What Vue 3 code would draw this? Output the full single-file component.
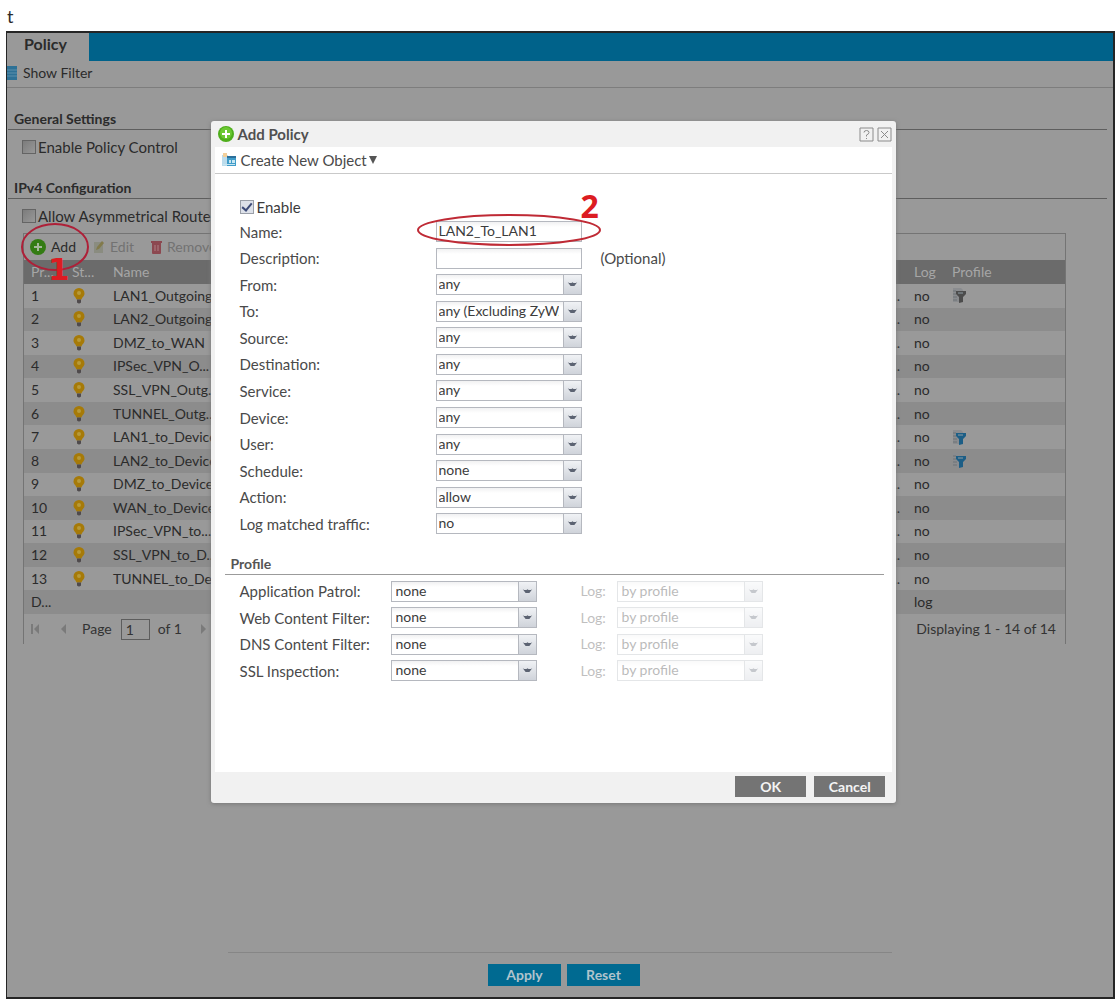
<script setup>
import { ref } from 'vue'

const rules = [
  { id: '1', name: 'LAN1_Outgoing', log: 'no', profile: 'grey' },
  { id: '2', name: 'LAN2_Outgoing', log: 'no' },
  { id: '3', name: 'DMZ_to_WAN', log: 'no' },
  { id: '4', name: 'IPSec_VPN_O...', log: 'no' },
  { id: '5', name: 'SSL_VPN_Outg...', log: 'no' },
  { id: '6', name: 'TUNNEL_Outg...', log: 'no' },
  { id: '7', name: 'LAN1_to_Device', log: 'no', profile: 'blue' },
  { id: '8', name: 'LAN2_to_Device', log: 'no', profile: 'blue' },
  { id: '9', name: 'DMZ_to_Device', log: 'no' },
  { id: '10', name: 'WAN_to_Device', log: 'no' },
  { id: '11', name: 'IPSec_VPN_to...', log: 'no' },
  { id: '12', name: 'SSL_VPN_to_D...', log: 'no' },
  { id: '13', name: 'TUNNEL_to_De...', log: 'no' },
  { id: 'D...', name: '', log: 'log' },
]

const fields = [
  { key: 'from', label: 'From:', value: 'any' },
  { key: 'to', label: 'To:', value: 'any (Excluding ZyWALL)' },
  { key: 'source', label: 'Source:', value: 'any' },
  { key: 'destination', label: 'Destination:', value: 'any' },
  { key: 'service', label: 'Service:', value: 'any' },
  { key: 'device', label: 'Device:', value: 'any' },
  { key: 'user', label: 'User:', value: 'any' },
  { key: 'schedule', label: 'Schedule:', value: 'none' },
  { key: 'action', label: 'Action:', value: 'allow' },
  { key: 'log', label: 'Log matched traffic:', value: 'no' },
]

const profiles = [
  { key: 'app', label: 'Application Patrol:' },
  { key: 'web', label: 'Web Content Filter:' },
  { key: 'dns', label: 'DNS Content Filter:' },
  { key: 'ssl', label: 'SSL Inspection:' },
]

const name = ref('LAN2_To_LAN1')
const description = ref('')
const enabled = ref(true)
const page = ref('1')
</script>

<template>
  <div class="doc">
    <p class="stray">t</p>
    <div class="frame">
      <nav class="tabs"><a class="tab" href="#policy">Policy</a></nav>
      <div class="filterbar">
        <svg class="filter-icon" viewBox="0 0 10 14" aria-hidden="true">
          <rect width="10" height="14" fill="#2d7196" />
          <path d="M0 4h10M0 7h10M0 10h10" stroke="#5d90ab" />
        </svg>
        <a href="#filter">Show Filter</a>
      </div>

      <h2 class="section">General Settings</h2>
      <label class="check"><input type="checkbox" />Enable Policy Control</label>
      <h2 class="section">IPv4 Configuration</h2>
      <label class="check"><input type="checkbox" />Allow Asymmetrical Route</label>

      <div class="grid">
        <div class="tools">
          <button type="button" class="tool add">
            <svg viewBox="0 0 16 16" width="16" height="16" aria-hidden="true">
              <circle cx="8" cy="8" r="8" fill="#347c14" />
              <path d="M8 4v8M4 8h8" stroke="#a5b89b" stroke-width="2" />
            </svg>Add
          </button>
          <button type="button" class="tool dim edit">
            <svg viewBox="0 0 12 14" width="12" height="14" aria-hidden="true">
              <path d="M1 2h9v11H1z" fill="#8a8c80" />
              <path d="M3 10l1-3 5-6 2 2-5 6z" fill="#827a4b" />
            </svg>Edit
          </button>
          <button type="button" class="tool dim">
            <svg viewBox="0 0 11 14" width="11" height="14" aria-hidden="true">
              <path d="M1 3h9v10q0 1-1 1H2q-1 0-1-1zM0 1h11v2H0z" fill="#8c4850" />
              <path d="M4 5v6M7 5v6" stroke="#ae8085" />
            </svg>Remove
          </button>
          <svg class="ring" viewBox="0 0 70 49" aria-hidden="true">
            <ellipse cx="35" cy="24" rx="33" ry="23" fill="none" stroke="#ae2038" stroke-width="2" />
          </svg>
          <span class="mark">1</span>
        </div>
        <table>
          <colgroup><col class="c-pr" /><col class="c-st" /><col class="c-name" /><col /><col class="c-log" /><col class="c-prof" /></colgroup>
          <thead>
            <tr><th>Pr...</th><th>St...</th><th>Name</th><th></th><th>Log</th><th>Profile</th></tr>
          </thead>
          <tbody>
            <tr v-for="r in rules" :key="r.id">
              <td>{{ r.id }}</td>
              <td>
                <svg v-if="r.name" class="bulb" viewBox="0 0 12 16" aria-hidden="true">
                  <path d="M6 0a5.500 5.500 0 0 1 5.500 5.500c0 3-2.500 3.500-3 6h-5c-.5-2.500-3-3-3-6A5.500 5.500 0 0 1 6 0z" fill="#a67a08" />
                  <circle cx="6" cy="5" r="2" fill="#b79a3a" />
                  <path d="M4 11.500h4v3q-2 2-4 0z" fill="#4f4a4c" />
                </svg>
              </td>
              <td>{{ r.name }}</td>
              <td class="more">{{ r.name ? '...' : '' }}</td>
              <td>{{ r.log }}</td>
              <td>
                <svg v-if="r.profile" :class="['prof', r.profile]" viewBox="0 0 14 15" aria-hidden="true">
                  <path d="M1 0h8l2 2v12H1z" fill="#8a8c8f" />
                  <path d="M1 3h3M1 6h3M1 9h4M1 12h4" stroke="#6d7276" />
                  <path d="M4 3h10v3l-3 3v5l-4 1V9L4 6z" fill="currentColor" />
                  <path d="M6 5h5" stroke="#8d9ba3" />
                </svg>
              </td>
            </tr>
          </tbody>
        </table>
        <div class="pager">
          <button type="button" class="nav" aria-label="First page"><svg viewBox="0 0 10 10" width="10" height="10"><path d="M1 0h2v10H1zM9 0v10L4 5z" /></svg></button>
          <button type="button" class="nav prev" aria-label="Previous page"><svg viewBox="0 0 10 10" width="10" height="10"><path d="M7 0v10L2 5z" /></svg></button>
          <label for="page">Page</label>
          <input id="page" v-model="page" type="text" />
          <span>of 1</span>
          <button type="button" class="nav next" aria-label="Next page"><svg viewBox="0 0 10 10" width="10" height="10"><path d="M2 0v10l5-5z" /></svg></button>
          <span class="count">Displaying 1 - 14 of 14</span>
        </div>
      </div>

      <footer class="actions">
        <button type="button">Apply</button>
        <button type="button">Reset</button>
      </footer>

      <section class="dialog" role="dialog" aria-labelledby="dlg-title">
        <header>
          <svg viewBox="0 0 16 16" width="16" height="16" aria-hidden="true">
            <circle cx="8" cy="8" r="8" fill="#4fae1c" />
            <circle cx="8" cy="7" r="6" fill="#6cc832" />
            <path d="M8 4v8M4 8h8" stroke="#fff" stroke-width="2" />
          </svg>
          <h1 id="dlg-title">Add Policy</h1>
          <button type="button" aria-label="Help"><svg viewBox="0 0 15 15" width="15" height="15"><path d="M1 1h13v13H1z" /><path d="M5 5.500q0-2 2.500-2t2.500 2q0 1.500-2.500 2.500v1.500M7.500 11v1" /></svg></button>
          <button type="button" aria-label="Close"><svg viewBox="0 0 15 15" width="15" height="15"><path d="M1 1h13v13H1z" /><path d="M4 4l7 7M11 4l-7 7" /></svg></button>
        </header>
        <div class="dlg-tools">
          <button type="button">
            <svg viewBox="0 0 14 14" width="14" height="14" aria-hidden="true">
              <path d="M0 2h6v11H0z" fill="#bcdcec" /><path d="M1 0h4v4H1z" fill="#f3cf9a" />
              <path d="M5 3h9v10H5z" fill="#3f9cc9" /><path d="M5 3h9v2H5z" fill="#2c6f9b" />
              <path d="M7 7h2v3H7zM10 7h3v3h-3zM1 11h12v1H1z" fill="#c8e6f2" />
            </svg>Create New Object<svg class="caret" viewBox="0 0 8 8" width="8" height="8" aria-hidden="true"><path d="M0 0h8L4 8z" fill="#555" /></svg>
          </button>
        </div>

        <form @submit.prevent>
          <div class="rows main-rows">
            <label class="enable"><input v-model="enabled" type="checkbox" />Enable</label>
            <div class="row">
              <label for="name">Name:</label>
              <div class="box">
                <input id="name" v-model="name" type="text" />
                <svg class="oval" viewBox="0 0 184 34" aria-hidden="true">
                  <ellipse cx="92" cy="17" rx="91" ry="15" fill="none" stroke="#bf2a35" stroke-width="2" />
                </svg>
                <span class="mark two">2</span>
              </div>
            </div>
            <div class="row">
              <label for="description">Description:</label>
              <div class="box"><input id="description" v-model="description" type="text" /></div>
              <span class="hint">(Optional)</span>
            </div>
            <div v-for="f in fields" :key="f.key" class="row">
              <label :for="f.key">{{ f.label }}</label>
              <div class="box">
                <select :id="f.key"><option>{{ f.value }}</option></select>
                <svg class="trigger" viewBox="0 0 18 19" aria-hidden="true"><path d="M4 7q3 2 5 0q2 2 5 0l-3 4h-4z" fill="#5c6372" /></svg>
              </div>
            </div>
          </div>

          <h2>Profile</h2>
          <div class="rows profile-rows">
            <div v-for="p in profiles" :key="p.key" class="row">
              <label :for="p.key">{{ p.label }}</label>
              <div class="box">
                <select :id="p.key"><option>none</option></select>
                <svg class="trigger" viewBox="0 0 18 19" aria-hidden="true"><path d="M4 7q3 2 5 0q2 2 5 0l-3 4h-4z" fill="#5c6372" /></svg>
              </div>
              <label class="log off" :for="p.key + '-log'">Log:</label>
              <div class="box off">
                <select :id="p.key + '-log'" disabled><option>by profile</option></select>
                <svg class="trigger" viewBox="0 0 18 19" aria-hidden="true"><path d="M4 7q3 2 5 0q2 2 5 0l-3 4h-4z" fill="#5c6372" /></svg>
              </div>
            </div>
          </div>
        </form>

        <div class="dlg-foot">
          <button type="button">OK</button>
          <button type="button">Cancel</button>
        </div>
      </section>
    </div>
  </div>
</template>

<style>
body { background: #fff; }
</style>

<style scoped>
* { box-sizing: border-box; }
.doc {
  display: flex;
  flex-direction: column;
  min-height: 100vh;
  padding: 0 3px 0 6px;
  font: 14px/18px Lato, "Liberation Sans", sans-serif;
  color: #2b2b2b;
}
button, input, select { font: inherit; color: inherit; margin: 0; padding: 0; border: 0; border-radius: 0; background: none; }
a { color: inherit; text-decoration: none; }
h1, h2, p { margin: 0; }
svg { display: block; flex: none; }
.stray { height: 31px; padding: 6px 0 0 1px; font-size: 18px; line-height: 20px; }

.frame {
  position: relative;
  flex: 1;
  display: flex;
  flex-direction: column;
  border: 2px solid #252525;
  border-left-width: 1px;
  background: #999;
}
.tabs { display: flex; height: 28px; background: #00628a; }
.tab { width: 82px; padding: 2px 0 0 17px; background: #999; font-weight: 700; font-size: 16px; color: #2b2b2b; }
.filterbar {
  display: flex;
  align-items: center;
  gap: 6px;
  height: 27px;
  padding-bottom: 3px;
  border-bottom: 1px solid #7d7d7d;
}
.filter-icon { width: 10px; height: 14px; }
.section {
  margin-left: 1px;
  margin-right: 6px;
  padding: 22px 0 1px 6px;
  border-bottom: 1px solid #5e5e5e;
  font-size: 14px;
  line-height: 18px;
  font-weight: 700;
}
.check { display: flex; align-items: center; gap: 2px; height: 18px; margin: 8px 0 0 15px; font-size: 15px; }
input[type="checkbox"] {
  appearance: none;
  width: 14px;
  height: 14px;
  border: 1px solid #646464;
  background: linear-gradient(135deg, #7c7c7c, #989898);
}
.check + .section { padding-top: 23px; }

.grid { margin: 8px 47px 0 16px; border: 1px solid #747474; border-bottom: 0; }
.tools { position: relative; display: flex; align-items: center; height: 26px; padding-left: 6px; }
.tool { display: flex; align-items: center; gap: 5px; }
.tool.dim { color: #727272; margin-left: 17px; }
.ring { position: absolute; left: -4px; top: -11px; width: 70px; height: 49px; z-index: 1; }
.mark {
  position: absolute;
  left: 24px;
  top: 20px;
  z-index: 2;
  font: 700 31px/30px "DejaVu Sans", sans-serif;
  color: #dc1c22;
}
table { width: 100%; height: 354px; table-layout: fixed; border-collapse: collapse; }
.c-pr { width: 41px; }
.c-st { width: 41px; }
.c-name { width: 120px; }
.c-log { width: 38px; }
.c-prof { width: 120px; }
th { background: #6b6b6b; color: #a6a6a6; font-weight: 400; text-align: left; }
th, td { padding: 0 0 0 7px; height: 20px; white-space: nowrap; }
th { height: 24px; }
tbody tr:nth-child(even) { background: #8c8c8c; }
td.more { text-align: right; padding-right: 7px; }
.bulb { width: 12px; height: 16px; margin-left: 1px; }
.prof { width: 14px; height: 15px; }
.prof.grey { color: #4c4c4c; }
.prof.blue { color: #1c5e86; }
.pager { display: flex; align-items: center; height: 30px; padding: 0 9px 0 6px; color: #333; }
.pager input { width: 29px; height: 21px; margin: 0 8px 0 9px; padding-left: 4px; border: 1px solid #5d5d5d; }
.nav svg { fill: #7a7a7a; }
.nav.prev { margin: 0 13px 0 19px; }
.nav.next { margin-left: 17px; }
.count { margin-left: auto; }

.actions {
  display: flex;
  justify-content: center;
  gap: 6px;
  margin: auto 20% 0;
  padding: 11px 0 11px 8px;
  border-top: 1px solid #868686;
}
.actions button { width: 73px; height: 22px; background: #006a91; color: #b1c3cc; font-weight: 700; }

.dialog {
  position: absolute;
  left: 18.4%;
  top: 88px;
  width: 62%;
  z-index: 3;
  border-radius: 3px;
  background: #f1f1f1;
  box-shadow: 0 1px 4px #777;
}
.dialog header { display: flex; align-items: center; gap: 3px; height: 26px; padding: 0 4px 0 7px; }
.dialog h1 { flex: 1; margin-left: 1px; font-size: 15px; line-height: 18px; font-weight: 700; color: #505050; }
.dialog header button svg { fill: none; stroke: #8b8b8b; }
.dlg-tools { margin: 0 4px; padding-left: 7px; height: 27px; background: #fff; border-bottom: 1px solid #c9c9c9; }
.dlg-tools button { display: flex; align-items: center; gap: 5px; height: 26px; font-size: 15px; color: #4a4a4a; }
.dlg-tools .caret { margin-left: -3px; }
form { margin: 0 4px; padding: 21px 8px 88px 10px; background: #fff; }
.rows { display: grid; padding-left: 15px; font-size: 15px; }
.main-rows { min-height: 342px; }
.profile-rows { min-height: 106px; margin-top: 3px; }
.enable { display: flex; align-items: center; gap: 3px; color: #3c3c3c; }
.enable input { border-color: #9a9fa8; background: #dde1e9; display: grid; place-items: center; }
.enable input:checked::after {
  content: "";
  width: 4px;
  height: 8px;
  margin-bottom: 2px;
  border: solid #3d4b78;
  border-width: 0 2px 2px 0;
  transform: rotate(40deg);
}
.row { display: flex; align-items: center; }
.row label { width: 196px; color: #4a4a4a; }
.profile-rows .row label { width: 151px; }
.profile-rows .row label.log { width: 36px; margin-left: 44px; font-size: 14px; }
.box { position: relative; width: 146px; height: 21px; font-size: 14px; }
.box input, .box select {
  display: block;
  width: 100%;
  height: 21px;
  padding: 0 22px 2px 2px;
  border: 1px solid #b5b8bf;
  background: linear-gradient(#f1f1f2, #fff 5px);
  color: #3c3c3c;
}
.box select { appearance: none; overflow: hidden; text-overflow: clip; }
.profile-rows .box select { padding-left: 4px; }
.trigger {
  position: absolute;
  right: 1px;
  top: 1px;
  width: 18px;
  height: 19px;
  border-left: 1px solid #b5b8bf;
  background: linear-gradient(#f0f2f5, #cfd3da);
  pointer-events: none;
}
.off { opacity: 0.35; }
.box.off select { opacity: 1; }
.oval { position: absolute; left: -19px; top: -8px; width: 184px; height: 34px; pointer-events: none; }
.mark.two { left: 145px; top: -30px; font-family: "Open Sans", sans-serif; font-size: 32px; }
.hint { margin-left: 19px; color: #4a4a4a; }
form h2 {
  margin-top: 16px;
  padding: 2px 0 1px 6px;
  border-bottom: 1px solid #9b9b9b;
  font-size: 14px;
  line-height: 18px;
  font-weight: 700;
  color: #555;
}
.dlg-foot { display: flex; justify-content: flex-end; gap: 8px; padding: 4px 11px 6px; }
.dlg-foot button { width: 71px; height: 21px; background: #747474; color: #f4f4f4; font-weight: 700; }
</style>
